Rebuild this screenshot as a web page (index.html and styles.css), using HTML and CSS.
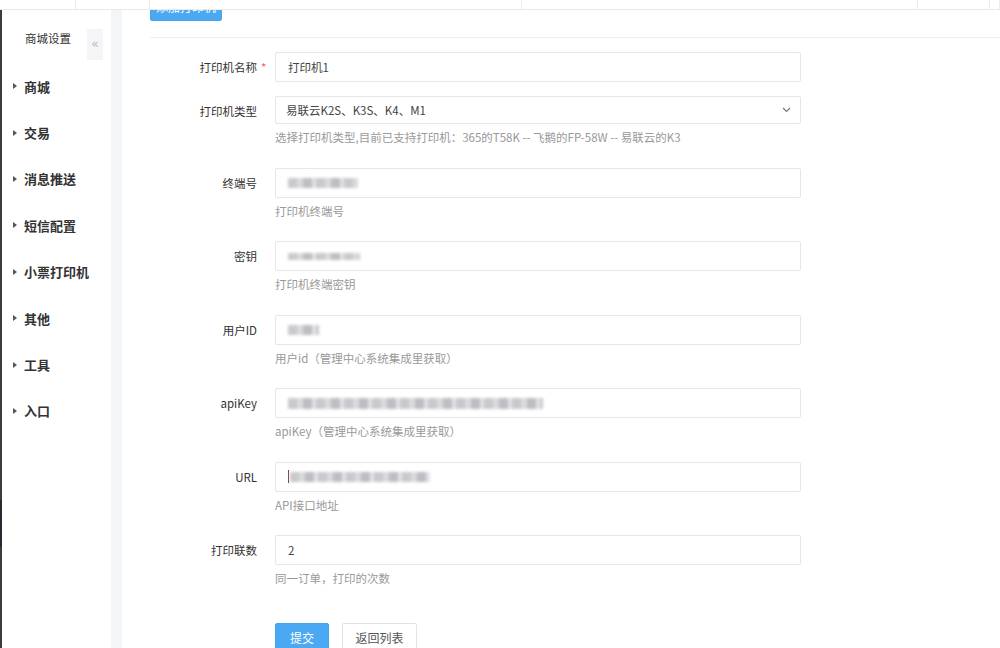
FILE: index.html
```html
<!DOCTYPE html>
<html lang="zh-CN">
<head>
    <meta charset="UTF-8">
    <title>小票打印机</title>
    <link rel="stylesheet" href="styles.css">
</head>
<body>

    <!-- Top Bar (fixed, lies over the page) -->
    <div class="top-bar">
        <div class="top-cell w76"></div>
        <div class="top-cell w74"></div>
        <div class="top-cell w372"></div>
        <div class="top-cell w396"></div>
        <div class="top-cell w72"></div>
        <div class="top-cell"></div>
    </div>

    <div class="page">
        <div class="edge"><div class="edge-dark"></div></div>

        <!-- Sidebar -->
        <div class="sidebar">
            <div class="side-head">
                <span class="side-title">商城设置</span>
                <button class="collapse-btn">«</button>
            </div>
            <ul class="menu">
                <li><span class="caret"></span>商城</li>
                <li><span class="caret"></span>交易</li>
                <li><span class="caret"></span>消息推送</li>
                <li><span class="caret"></span>短信配置</li>
                <li><span class="caret"></span>小票打印机</li>
                <li><span class="caret"></span>其他</li>
                <li><span class="caret"></span>工具</li>
                <li><span class="caret"></span>入口</li>
            </ul>
        </div>

        <div class="gutter"></div>

        <!-- Main Content -->
        <div class="main">
            <div class="main-head">
                <button class="btn btn-primary add-btn">添加打印机</button>
            </div>

            <form class="form">
                <div class="form-group">
                    <label class="label">打印机名称</label>
                    <span class="required">*</span>
                    <div class="field">
                        <div class="input">打印机1</div>
                    </div>
                </div>

                <div class="form-group">
                    <label class="label">打印机类型</label>
                    <span class="required"></span>
                    <div class="field">
                        <div class="input select">
                            易联云K2S、K3S、K4、M1
                            <svg class="arrow" width="9" height="6" viewBox="0 0 9 6"><path d="M1 1l3.5 3.5L8 1" fill="none" stroke="#777" stroke-width="1.2"/></svg>
                        </div>
                        <div class="help">选择打印机类型,目前已支持打印机：365的T58K -- 飞鹅的FP-58W -- 易联云的K3</div>
                    </div>
                </div>

                <div class="form-group">
                    <label class="label">终端号</label>
                    <span class="required"></span>
                    <div class="field">
                        <div class="input"><span class="blur blur-70"></span></div>
                        <div class="help">打印机终端号</div>
                    </div>
                </div>

                <div class="form-group">
                    <label class="label">密钥</label>
                    <span class="required"></span>
                    <div class="field">
                        <div class="input"><span class="blur blur-72"></span></div>
                        <div class="help">打印机终端密钥</div>
                    </div>
                </div>

                <div class="form-group">
                    <label class="label">用户ID</label>
                    <span class="required"></span>
                    <div class="field">
                        <div class="input"><span class="blur blur-31"></span></div>
                        <div class="help">用户id（管理中心系统集成里获取）</div>
                    </div>
                </div>

                <div class="form-group">
                    <label class="label">apiKey</label>
                    <span class="required"></span>
                    <div class="field">
                        <div class="input"><span class="blur blur-255"></span></div>
                        <div class="help">apiKey（管理中心系统集成里获取）</div>
                    </div>
                </div>

                <div class="form-group">
                    <label class="label">URL</label>
                    <span class="required"></span>
                    <div class="field">
                        <div class="input"><span class="cursor"></span><span class="blur blur-140"></span></div>
                        <div class="help">API接口地址</div>
                    </div>
                </div>

                <div class="form-group">
                    <label class="label">打印联数</label>
                    <span class="required"></span>
                    <div class="field">
                        <div class="input">2</div>
                        <div class="help">同一订单，打印的次数</div>
                    </div>
                </div>

                <div class="form-actions">
                    <button type="button" class="btn btn-primary">提交</button>
                    <button type="button" class="btn btn-default">返回列表</button>
                </div>
            </form>
        </div>
    </div>

</body>
</html>
```

FILE: styles.css
```css
* {
    margin: 0;
    padding: 0;
    box-sizing: border-box;
}

html, body {
    height: 100%;
    overflow: hidden;
}

body {
    font-family: "Noto Sans CJK SC", "Noto Sans", sans-serif;
    font-size: 11.5px;
    color: #333;
    background-color: #fff;
}

/* Top Bar */
.top-bar {
    position: fixed;
    top: 0;
    left: 0;
    width: 100%;
    height: 10px;
    display: flex;
    background-color: #fff;
    border-bottom: 1px solid #e9e9e9;
    z-index: 100;
}

.top-cell {
    height: 100%;
    border-right: 1px solid #ececec;
    flex: 1;
}

.w76 { flex: 0 0 76px; }
.w74 { flex: 0 0 74px; }
.w372 { flex: 0 0 372px; }
.w396 { flex: 0 0 396px; }
.w72 { flex: 0 0 72px; }

.page {
    display: flex;
    height: 100%;
}

.edge {
    width: 2px;
    background-color: #3c3c3c;
    display: flex;
    flex-direction: column;
    padding-top: 500px;
}

.edge-dark {
    height: 47px;
    background-color: #262a30;
}

/* Sidebar */
.sidebar {
    width: 109px;
    padding-top: 29px;
    background-color: #fff;
}

.side-head {
    display: flex;
    align-items: flex-start;
    justify-content: space-between;
    padding-left: 23px;
    padding-right: 8px;
    height: 34px;
}

.side-title {
    line-height: 18px;
    font-size: 11.5px;
    color: #333;
}

.collapse-btn {
    width: 16px;
    height: 31px;
    border: none;
    background-color: #f4f5f7;
    color: #b3b8c2;
    font-size: 12px;
    line-height: 31px;
    font-family: "DejaVu Sans", sans-serif;
}

.menu {
    list-style: none;
}

.menu li {
    display: flex;
    align-items: center;
    height: 46.4px;
    padding-left: 11px;
    font-size: 13px;
    font-weight: bold;
    color: #333;
}

.caret {
    width: 0;
    height: 0;
    border-top: 3.5px solid transparent;
    border-bottom: 3.5px solid transparent;
    border-left: 4px solid #555;
    margin-right: 7px;
}

.gutter {
    width: 11px;
    background-color: #f4f5f7;
}

/* Main Content */
.main {
    flex: 1;
    padding-left: 28px;
}

.main-head {
    margin-top: -8px;
    padding-bottom: 16px;
    border-bottom: 1px solid #eee;
}

.btn {
    font-family: inherit;
    font-size: 12px;
    border-radius: 2px;
    cursor: pointer;
}

.btn-primary {
    background-color: #4aa9f2;
    border: 1px solid #45a4ee;
    color: #fff;
}

.btn-default {
    background-color: #fff;
    border: 1px solid #e3e3e3;
    color: #555;
}

.add-btn {
    width: 72px;
    height: 29px;
}

/* Form */
.form {
    padding-top: 14px;
}

.form-group {
    display: flex;
    align-items: flex-start;
    margin-bottom: 14px;
}

.label {
    width: 107px;
    text-align: right;
    line-height: 30px;
    color: #333;
}

.required {
    width: 18px;
    line-height: 30px;
    padding-left: 4px;
    color: #e66;
}

.field {
    width: 526px;
}

.input {
    height: 30px;
    border: 1px solid #e6e6e6;
    border-radius: 2px;
    padding-left: 12px;
    display: flex;
    align-items: center;
    color: #444;
    background-color: #fff;
}

.select {
    height: 28px;
    padding-left: 10px;
    padding-right: 9px;
    justify-content: space-between;
}

.help {
    margin-top: 5px;
    margin-bottom: 7.5px;
    line-height: 17px;
    color: #999;
}

.blur {
    display: block;
    height: 10px;
    filter: blur(1.6px);
    background: repeating-linear-gradient(90deg, #c9c9cd 0 9px, #dadadd 9px 15px, #bdbdc2 15px 24px, #e2e2e5 24px 28px);
}

.blur-70 { width: 70px; }
.blur-72 { width: 72px; height: 7px; }
.blur-31 { width: 31px; }
.blur-255 { width: 255px; height: 11px; }
.blur-140 { width: 140px; }

.cursor {
    width: 1px;
    height: 13px;
    background-color: #7a3b3b;
    margin-right: 1px;
}

.form-actions {
    padding-left: 125px;
    padding-top: 14px;
    display: flex;
    gap: 13px;
}

.form-actions .btn {
    height: 30px;
}

.form-actions .btn-primary {
    width: 54px;
}

.form-actions .btn-default {
    width: 75px;
}
```
